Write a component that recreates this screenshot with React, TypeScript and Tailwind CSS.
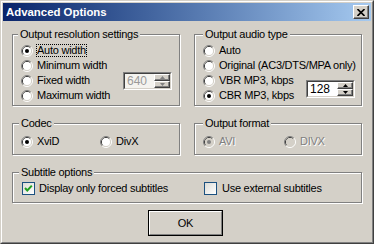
import React from "react";

const FONT = "font-['Liberation_Sans',Arial,sans-serif]";
const TXT = "text-[11px] tracking-[-0.25px]";

function Radio({ checked, disabled }: { checked?: boolean; disabled?: boolean }) {
  const fill = disabled ? "#d4d0c8" : "#ffffff";
  const dot = disabled ? "#808080" : "#000000";
  return (
    <svg width="12" height="12" viewBox="0 0 12 12" className="shrink-0">
      <path d="M2.11 9.89 A5.5 5.5 0 0 1 9.89 2.11" stroke="#808080" strokeWidth="1" fill="none" />
      <path d="M9.89 2.11 A5.5 5.5 0 0 1 2.11 9.89" stroke="#ffffff" strokeWidth="1" fill="none" />
      <path d="M2.82 9.18 A4.5 4.5 0 0 1 9.18 2.82" stroke="#404040" strokeWidth="1" fill="none" />
      <path d="M9.18 2.82 A4.5 4.5 0 0 1 2.82 9.18" stroke="#d4d0c8" strokeWidth="1" fill="none" />
      <circle cx="6" cy="6" r="4" fill={fill} />
      {checked && <circle cx="6" cy="6" r="2" fill={dot} />}
    </svg>
  );
}

function RadioRow({
  label,
  checked,
  disabled,
  focus,
  className = "",
}: {
  label: string;
  checked?: boolean;
  disabled?: boolean;
  focus?: boolean;
  className?: string;
}) {
  return (
    <div className={`flex h-[15px] items-center ${className}`}>
      <Radio checked={checked} disabled={disabled} />
      <span
        className={`ml-[3px] border ${
          focus ? "border-dotted border-black" : "border-transparent"
        } ${TXT} leading-[11px] whitespace-nowrap ${
          disabled ? "text-[#808080] [text-shadow:1px_1px_0_#fff]" : "text-black"
        }`}
      >
        {label}
      </span>
    </div>
  );
}

function CheckBox({ checked }: { checked?: boolean }) {
  return (
    <div className="flex h-[13px] w-[13px] shrink-0 items-center justify-center border border-[#1c5180] bg-linear-to-br from-[#dcdcd7] to-white">
      {checked && (
        <svg width="11" height="11" viewBox="0 0 11 11">
          <path d="M2 5 L4.3 7.5 L8.8 2.6" stroke="#21a121" strokeWidth="2" fill="none" />
        </svg>
      )}
    </div>
  );
}

function SpinBtn({ up, disabled }: { up?: boolean; disabled?: boolean }) {
  const c = disabled ? "#808080" : "#000000";
  return (
    <div className="flex flex-1 items-center justify-center border border-t-white border-l-white border-r-[#404040] border-b-[#404040] bg-[#d4d0c8] shadow-[inset_-1px_-1px_0_#808080]">
      <svg width="5" height="3" viewBox="0 0 5 3">
        {up ? <path d="M0 3 L2.5 0 L5 3 Z" fill={c} /> : <path d="M0 0 L2.5 3 L5 0 Z" fill={c} />}
      </svg>
    </div>
  );
}

function Spin({ value, disabled, className = "" }: { value: string; disabled?: boolean; className?: string }) {
  return (
    <div
      className={`flex h-[18px] w-[49px] shrink-0 border border-t-[#808080] border-l-[#808080] border-r-white border-b-white ${className}`}
    >
      <div
        className={`flex flex-1 border border-t-[#404040] border-l-[#404040] border-r-[#d4d0c8] border-b-[#d4d0c8] ${
          disabled ? "bg-[#f4f3ef]" : "bg-white"
        }`}
      >
        <span
          className={`flex-1 pl-[2px] text-[12px] leading-[14px] ${
            disabled ? "text-[#9a9a9a]" : "text-black"
          }`}
        >
          {value}
        </span>
        <div className="flex w-[16px] flex-col">
          <SpinBtn up disabled={disabled} />
          <SpinBtn disabled={disabled} />
        </div>
      </div>
    </div>
  );
}

function Group({
  label,
  labelLeft,
  className = "",
  children,
}: {
  label: string;
  labelLeft: string;
  className?: string;
  children: React.ReactNode;
}) {
  return (
    <div
      className={`relative border border-[#808080] shadow-[inset_1px_1px_0_#fff,1px_1px_0_#fff] ${className}`}
    >
      <span
        className={`absolute -top-[7px] ${labelLeft} bg-[#d4d0c8] px-[2px] ${TXT} leading-[13px] whitespace-nowrap text-black`}
      >
        {label}
      </span>
      {children}
    </div>
  );
}

export default function App() {
  return (
    <div
      className={`h-[244px] w-[374px] border border-t-[#d4d0c8] border-l-[#d4d0c8] border-r-[#404040] border-b-[#404040] bg-[#d4d0c8] ${FONT}`}
    >
      <div className="flex h-full flex-col border border-t-white border-l-white border-r-[#808080] border-b-[#808080] p-[1px]">
        {/* Title bar */}
        <div className="flex h-[18px] shrink-0 items-center bg-linear-to-r from-[#0a246a] to-[#a6caf0] pl-[3px] pr-[2px]">
          <span className="text-[11.4px] font-bold leading-[14px] text-white">Advanced Options</span>
          <div className="ml-auto flex h-[14px] w-[16px] items-center justify-center border border-t-white border-l-white border-r-[#404040] border-b-[#404040] bg-[#d4d0c8] shadow-[inset_-1px_-1px_0_#808080]">
            <svg width="8" height="7" viewBox="0 0 8 7">
              <path d="M0.5 0 L7.5 7 M7.5 0 L0.5 7" stroke="#000" strokeWidth="1.6" />
            </svg>
          </div>
        </div>

        {/* Body */}
        <div className="flex flex-1 flex-col px-[9px]">
          {/* Row 1 */}
          <div className="mt-[13px] flex gap-[14px]">
            <Group label="Output resolution settings" labelLeft="left-[5px]" className="h-[72px] w-[168px] pl-[8px] pr-[7px] pt-[8px]">
              <RadioRow label="Auto width" checked focus />
              <RadioRow label="Minimum width" />
              <div className="flex h-[15px] items-center justify-between">
                <RadioRow label="Fixed width" />
                <Spin value="640" disabled />
              </div>
              <RadioRow label="Maximum width" />
            </Group>
            <Group label="Output audio type" labelLeft="left-[8px]" className="h-[72px] w-[168px] pl-[8px] pr-[6px] pt-[8px]">
              <RadioRow label="Auto" />
              <RadioRow label="Original (AC3/DTS/MPA only)" />
              <div className="flex items-end justify-between">
                <div className="flex flex-col">
                  <RadioRow label="VBR MP3, kbps" />
                  <RadioRow label="CBR MP3, kbps" checked />
                </div>
                <Spin value="128" className="mb-[5px]" />
              </div>
            </Group>
          </div>

          {/* Row 2 */}
          <div className="mt-[17px] flex gap-[14px]">
            <Group label="Codec" labelLeft="left-[6px]" className="h-[32px] w-[168px] pl-[8px] pt-[10px]">
              <div className="flex">
                <RadioRow label="XviD" checked className="w-[79px]" />
                <RadioRow label="DivX" />
              </div>
            </Group>
            <Group label="Output format" labelLeft="left-[8px]" className="h-[32px] w-[168px] pl-[8px] pt-[10px]">
              <div className="flex">
                <RadioRow label="AVI" checked disabled className="w-[81px]" />
                <RadioRow label="DIVX" disabled />
              </div>
            </Group>
          </div>

          {/* Row 3 */}
          <Group label="Subtitle options" labelLeft="left-[6px]" className="mt-[17px] h-[31px] w-[350px] pl-[9px] pt-[9px]">
            <div className="flex items-center">
              <div className="flex w-[182px] items-center">
                <CheckBox checked />
                <span className={`ml-[4px] ${TXT} leading-[13px] whitespace-nowrap`}>Display only forced subtitles</span>
              </div>
              <div className="flex items-center">
                <CheckBox />
                <span className={`ml-[5px] ${TXT} leading-[13px] whitespace-nowrap`}>Use external subtitles</span>
              </div>
            </div>
          </Group>

          {/* OK button */}
          <div className="mt-[7px] flex justify-center pr-[3px]">
            <div className="h-[26px] w-[75px] border border-black">
              <div className={`flex h-full w-full items-center justify-center border border-t-white border-l-white border-r-[#808080] border-b-[#808080] ${TXT}`}>
                OK
              </div>
            </div>
          </div>
        </div>
      </div>
    </div>
  );
}
